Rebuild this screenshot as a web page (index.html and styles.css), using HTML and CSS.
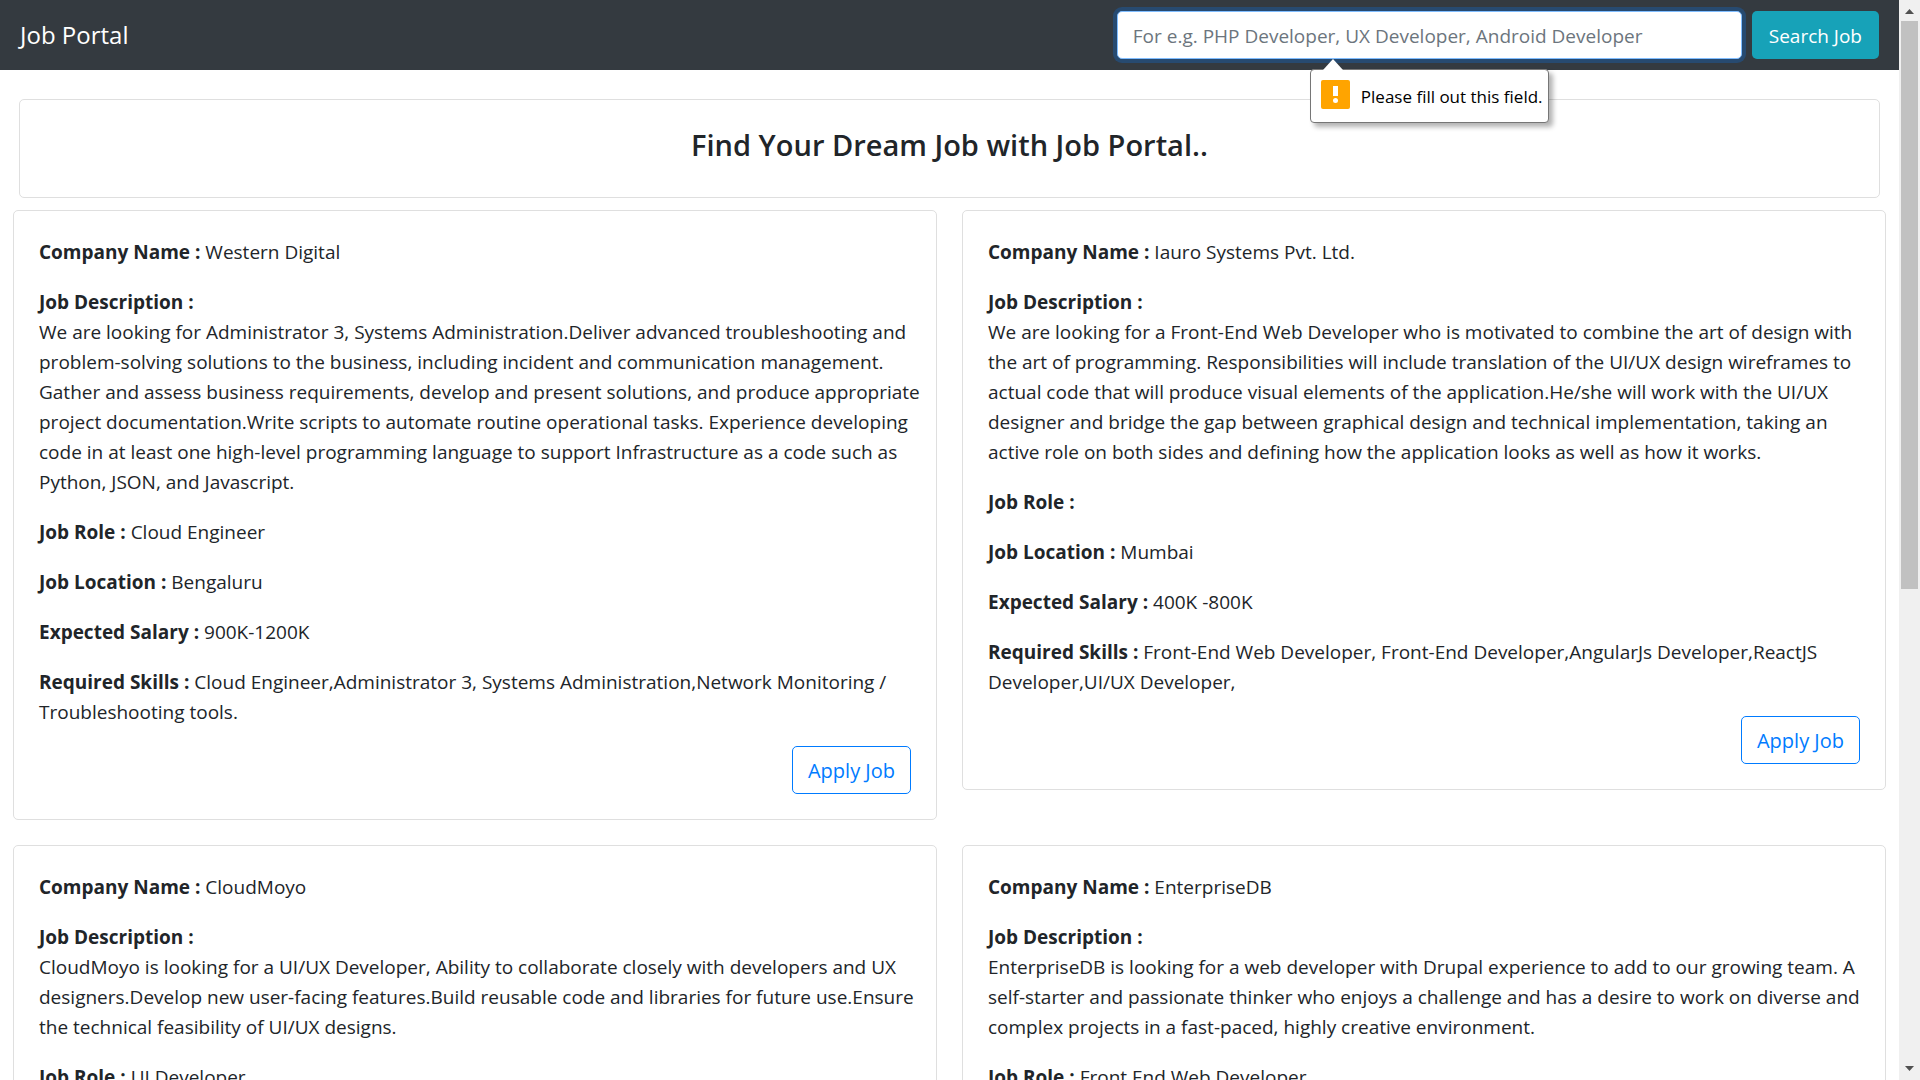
FILE: index.html
```html
<!DOCTYPE html>
<html lang="en">
<head>
<meta charset="utf-8">
<meta name="viewport" content="width=device-width, initial-scale=1">
<title>Job Portal</title>
<link rel="stylesheet" href="styles.css">
</head>
<body>
<div class="page">
  <header class="navbar">
    <a class="brand" href="#">Job Portal</a>
    <form class="search" novalidate>
      <div class="search-field">
        <input class="search-input" type="search" aria-label="Search jobs" placeholder="For e.g. PHP Developer, UX Developer, Android Developer" required>
        <div class="bubble" role="alert">
          <svg class="bubble-arrow" width="20" height="11" viewBox="0 0 20 11" aria-hidden="true"><path d="M10 0 20 11H0z" fill="#fff"/></svg>
          <svg class="bubble-icon" width="29" height="29" viewBox="0 0 29 29" aria-hidden="true"><rect width="29" height="29" rx="2" fill="#ffa400"/><path d="M12 6h5v10h-5z" fill="#fff"/><circle cx="14.5" cy="20.5" r="2.5" fill="#fff"/></svg>
          <span>Please fill out this field.</span>
        </div>
      </div>
      <button class="btn btn-info" type="submit">Search Job</button>
    </form>
  </header>

  <main>
    <section class="card hero">
      <h1 class="hero-title">Find Your Dream Job with Job Portal..</h1>
    </section>

    <div class="jobs">
      <article class="card job">
        <p><b>Company Name :</b> Western Digital</p>
        <p><b>Job Description :</b><br>We are looking for Administrator 3, Systems Administration.Deliver advanced troubleshooting and<br>problem-solving solutions to the business, including incident and communication management.<br>Gather and assess business requirements, develop and present solutions, and produce appropriate<br>project documentation.Write scripts to automate routine operational tasks. Experience developing<br>code in at least one high-level programming language to support Infrastructure as a code such as<br>Python, JSON, and Javascript.</p>
        <p><b>Job Role :</b> Cloud Engineer</p>
        <p><b>Job Location :</b> Bengaluru</p>
        <p><b>Expected Salary :</b> 900K-1200K</p>
        <p><b>Required Skills :</b> Cloud Engineer,Administrator 3, Systems Administration,Network Monitoring /<br>Troubleshooting tools.</p>
        <button class="btn btn-outline" type="button">Apply Job</button>
      </article>

      <article class="card job">
        <p><b>Company Name :</b> Iauro Systems Pvt. Ltd.</p>
        <p><b>Job Description :</b><br>We are looking for a Front-End Web Developer who is motivated to combine the art of design with<br>the art of programming. Responsibilities will include translation of the UI/UX design wireframes to<br>actual code that will produce visual elements of the application.He/she will work with the UI/UX<br>designer and bridge the gap between graphical design and technical implementation, taking an<br>active role on both sides and defining how the application looks as well as how it works.</p>
        <p><b>Job Role :</b></p>
        <p><b>Job Location :</b> Mumbai</p>
        <p><b>Expected Salary :</b> 400K -800K</p>
        <p><b>Required Skills :</b> Front-End Web Developer, Front-End Developer,AngularJs Developer,ReactJS<br>Developer,UI/UX Developer,</p>
        <button class="btn btn-outline" type="button">Apply Job</button>
      </article>

      <article class="card job">
        <p><b>Company Name :</b> CloudMoyo</p>
        <p><b>Job Description :</b><br>CloudMoyo is looking for a UI/UX Developer, Ability to collaborate closely with developers and UX<br>designers.Develop new user-facing features.Build reusable code and libraries for future use.Ensure<br>the technical feasibility of UI/UX designs.</p>
        <p><b>Job Role :</b> UI Developer</p>
      </article>

      <article class="card job">
        <p><b>Company Name :</b> EnterpriseDB</p>
        <p><b>Job Description :</b><br>EnterpriseDB is looking for a web developer with Drupal experience to add to our growing team. A<br>self-starter and passionate thinker who enjoys a challenge and has a desire to work on diverse and<br>complex projects in a fast-paced, highly creative environment.</p>
        <p><b>Job Role :</b> Front End Web Developer</p>
      </article>
    </div>
  </main>
</div>

<div class="scrollbar" aria-hidden="true">
  <svg class="scroll-arrow" width="21" height="21" viewBox="0 0 21 21"><path d="M6 14 10.500 9 15 14z" fill="#505050"/></svg>
  <div class="scroll-track"><div class="scroll-thumb"></div></div>
  <svg class="scroll-arrow" width="21" height="21" viewBox="0 0 21 21"><path d="M6 7h9l-4.500 5z" fill="#505050"/></svg>
</div>
</body>
</html>
```

FILE: styles.css
```css
*, *::before, *::after { box-sizing: border-box; }

body {
  margin: 0;
  display: flex;
  height: 100vh;
  overflow: hidden;
  background: #fff;
  color: #212529;
  font-family: "Segoe UI", "Open Sans", "Noto Sans", sans-serif;
  font-size: 19px;
  line-height: 30px;
}

.page { flex: 1; min-width: 0; overflow: hidden; }

.navbar {
  display: flex;
  align-items: center;
  justify-content: space-between;
  padding: 11px 20px;
  background: #343a40;
}

.brand { color: #fff; font-size: 24px; line-height: 38px; text-decoration: none; }

.search { display: flex; gap: 10px; width: 41%; min-width: 300px; }
.search-field { position: relative; flex: 1; }

.search-input {
  display: block;
  width: 100%;
  height: 48px;
  padding: 2px 15px 0;
  border: 1px solid #80bdff;
  border-radius: 5px;
  outline: 0;
  background: #fff;
  box-shadow: 0 0 0 4px rgba(0, 123, 255, .25);
  color: #495057;
  font: inherit;
  appearance: none;
}
.search-input::placeholder { color: #6c757d; opacity: 1; }

.bubble {
  position: absolute;
  top: 58px;
  left: 193px;
  z-index: 1;
  display: flex;
  gap: 11px;
  height: 54px;
  padding: 10px 5px 10px 10px;
  border: 1px solid #767676;
  border-radius: 4px;
  background: #fff;
  box-shadow: 4px 4px 5px rgba(0, 0, 0, .3);
  color: #000;
  font-size: 17px;
  line-height: 34px;
  white-space: nowrap;
}
.bubble-arrow { position: absolute; top: -11px; left: 12px; }

.btn {
  height: 48px;
  padding: 2px 16px 0;
  border: 1px solid transparent;
  border-radius: 5px;
  font: inherit;
  white-space: nowrap;
}
.btn-info { background: #17a2b8; color: #fff; }
.btn-outline { padding: 2px 15px 0; border-color: #007bff; background: #fff; color: #007bff; font-size: 20px; }

.card { border: 1px solid #dfdfdf; border-radius: 5px; background: #fff; padding: 26px 25px 24px; }

.hero { margin: 29px 19px 12px; padding-bottom: 34px; text-align: center; }
.hero-title { margin: 0; font-size: 29px; font-weight: 600; line-height: 37px; }

.jobs {
  display: grid;
  grid-template-columns: repeat(2, minmax(0, 1fr));
  gap: 25px;
  align-items: start;
  padding: 0 13px 25px;
}
.job { white-space: nowrap; display: flex; flex-direction: column; gap: 20px; }
.job p { margin: 0; }
.job b { font-weight: 700; }
.job .btn { align-self: flex-end; margin-top: -1px; margin-bottom: 1px; }

.scrollbar { display: flex; flex-direction: column; width: 21px; background: #f0f0f0; }
.scroll-arrow { flex: none; display: block; }
.scroll-track { flex: 1; padding: 0 2px; }
.scroll-thumb { height: 54.7%; background: #c1c1c1; }
```
